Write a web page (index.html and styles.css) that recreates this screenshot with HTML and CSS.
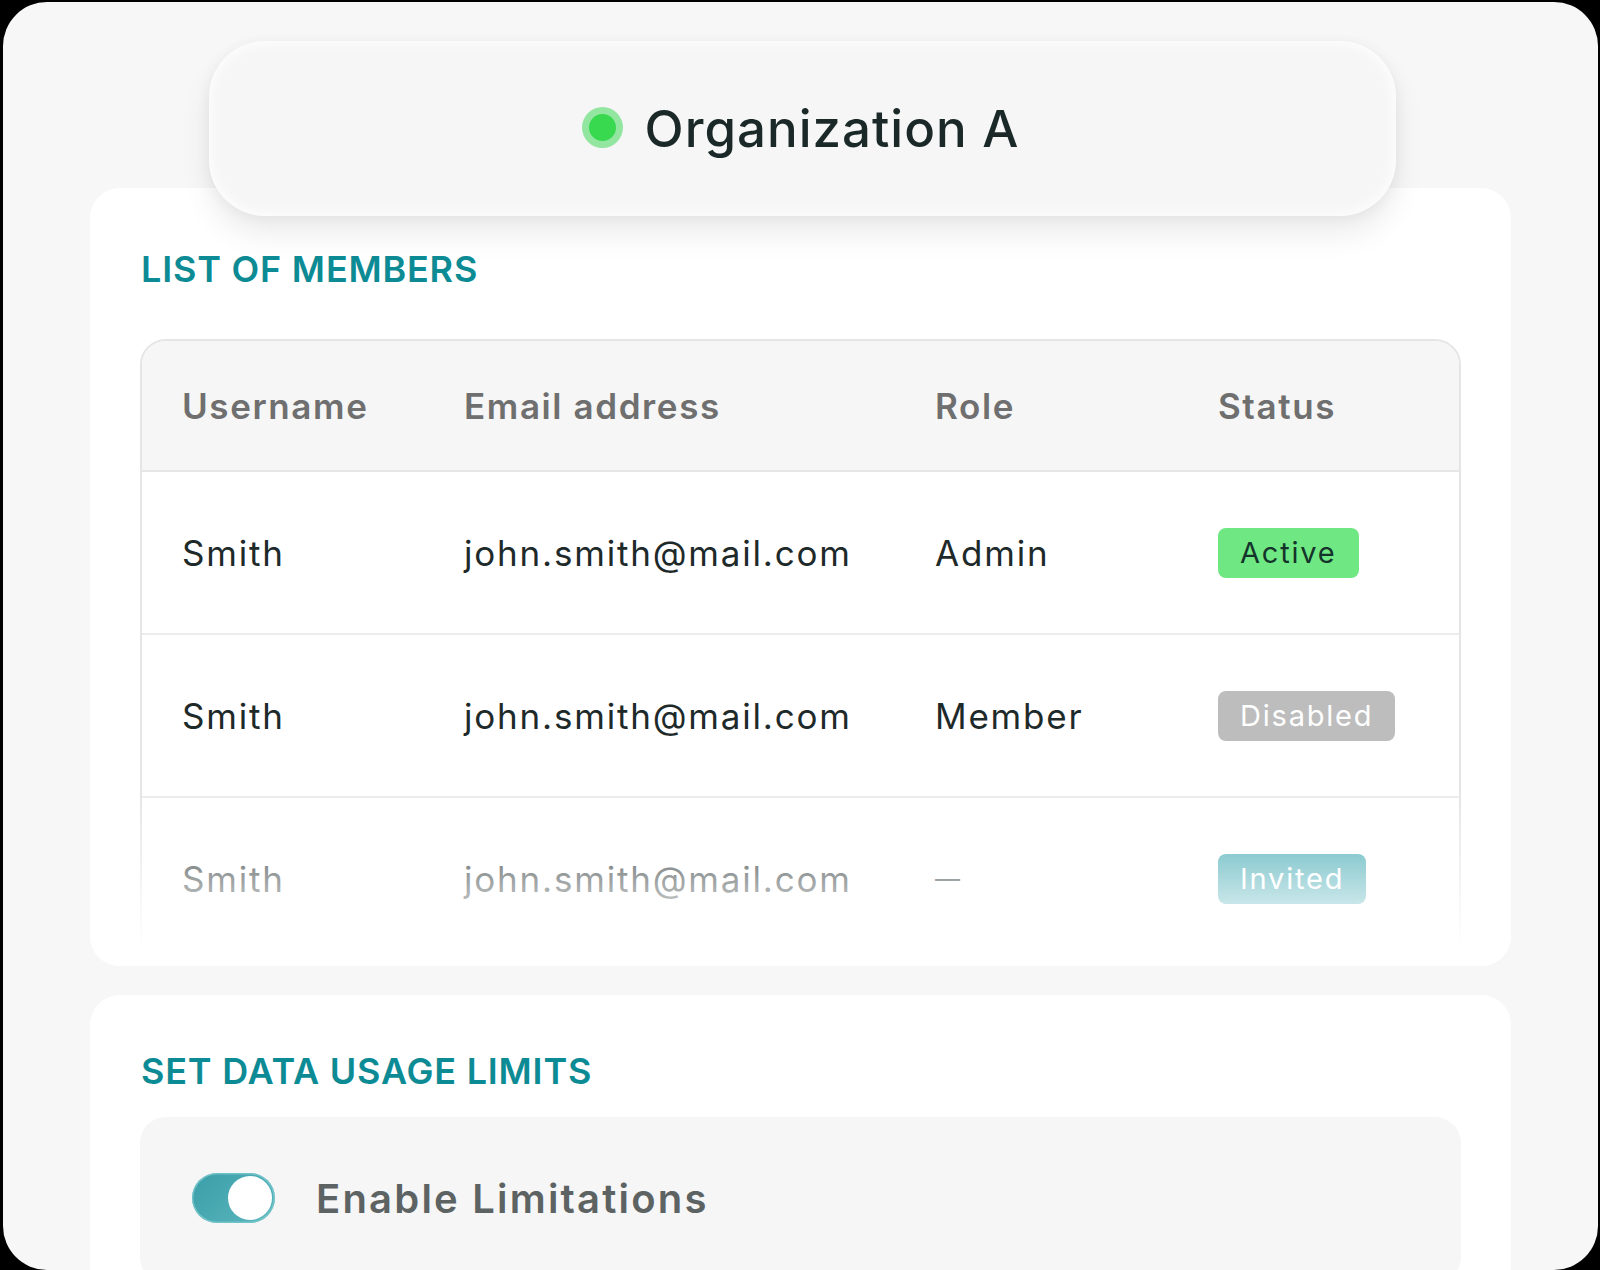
FILE: index.html
```html
<!DOCTYPE html>
<html lang="en">
<head>
<meta charset="utf-8">
<title>Organization A</title>
<link rel="stylesheet" href="styles.css">
</head>
<body>
<div class="frame">
  <div class="org-card">
    <span class="dot"><span class="dot-core"></span></span>
    <span class="org-name">Organization A</span>
  </div>

  <section class="card members">
    <h2 class="section-title">LIST OF MEMBERS</h2>
    <div class="table">
      <div class="row head">
        <div>Username</div>
        <div>Email address</div>
        <div>Role</div>
        <div>Status</div>
      </div>
      <div class="row">
        <div>Smith</div>
        <div>john.smith@mail.com</div>
        <div>Admin</div>
        <div><span class="badge active">Active</span></div>
      </div>
      <div class="row">
        <div>Smith</div>
        <div>john.smith@mail.com</div>
        <div>Member</div>
        <div><span class="badge disabled">Disabled</span></div>
      </div>
      <div class="row">
        <div>Smith</div>
        <div>john.smith@mail.com</div>
        <div><span class="dash">—</span></div>
        <div><span class="badge invited">Invited</span></div>
      </div>
    </div>
    <div class="fade"></div>
  </section>

  <section class="card limits">
    <h2 class="section-title">SET DATA USAGE LIMITS</h2>
    <div class="limit-box">
      <span class="toggle"><span class="knob"></span></span>
      <span class="limit-label">Enable Limitations</span>
    </div>
  </section>
</div>
</body>
</html>
```

FILE: styles.css
```css
* { box-sizing: border-box; }

body {
  margin: 0;
  background: #000;
  font-family: Inter, "Noto Sans", sans-serif;
}

.frame {
  margin: 2px 2px 0 3px;
  width: 1595px;
  height: 1268px;
  background: #f7f7f7;
  border-radius: 44px;
  overflow: hidden;
  padding-top: 39px;
}

.org-card {
  position: relative;
  z-index: 2;
  margin-left: 206px;
  margin-bottom: -28px;
  width: 1187px;
  height: 175px;
  border-radius: 56px;
  background: #f6f6f6;
  display: flex;
  align-items: center;
  justify-content: center;
  gap: 22px;
  box-shadow:
    inset 0 0 14px 2px rgba(255, 255, 255, 0.95),
    0 18px 30px rgba(0, 0, 0, 0.08),
    0 2px 14px rgba(0, 0, 0, 0.05);
}

.dot {
  width: 41px;
  height: 41px;
  border-radius: 50%;
  background: #92e6a0;
  display: flex;
  align-items: center;
  justify-content: center;
  margin-top: -2px;
}

.dot-core {
  width: 27px;
  height: 27px;
  border-radius: 50%;
  background: #38d84f;
}

.org-name {
  font-size: 51px;
  font-weight: 500;
  color: #1b2828;
  letter-spacing: 1px;
  margin-right: 4px;
}

.card {
  margin-left: 87px;
  width: 1421px;
  background: #fff;
  border-radius: 30px;
  padding: 0 50px;
}

.section-title {
  margin: 0;
  padding-left: 1px;
  font-size: 36px;
  line-height: 44px;
  font-weight: 600;
  color: #0d8b95;
  letter-spacing: 0.8px;
}

.members {
  position: relative;
  height: 778px;
  padding-top: 59px;
  overflow: hidden;
}

.table {
  margin-top: 48px;
  border: 2px solid #e5e5e5;
  border-radius: 26px;
  overflow: hidden;
}

.row {
  display: grid;
  grid-template-columns: 282px 471px 283px 1fr;
  align-items: center;
  padding-left: 40px;
  height: 163px;
  border-bottom: 2px solid #ececec;
  font-size: 35px;
  color: #1e2a2a;
  letter-spacing: 1.8px;
}

.row.head {
  height: 131px;
  background: #f6f6f6;
  border-bottom: 2px solid #e6e6e6;
  color: #6f6f6f;
  font-weight: 600;
  letter-spacing: 1.6px;
}

.dash {
  font-size: 25px;
  letter-spacing: 0;
  vertical-align: 4px;
}

.badge {
  display: inline-flex;
  align-items: center;
  height: 50px;
  padding: 0 22px;
  border-radius: 8px;
  font-size: 29px;
  letter-spacing: 1.8px;
}

.badge.active {
  background: #6fe884;
  color: #14332a;
}

.badge.disabled {
  background: #bdbdbd;
  color: #fff;
}

.badge.invited {
  background: #3fa8b2;
  color: #fff;
}

.fade {
  position: absolute;
  left: 0;
  right: 0;
  bottom: 0;
  height: 175px;
  background: linear-gradient(rgba(255, 255, 255, 0) 0%, #fff 90%);
  pointer-events: none;
}

.limits {
  margin-top: 29px;
  height: 400px;
  padding-top: 54px;
}

.limit-box {
  margin-top: 24px;
  background: #f6f6f6;
  border-radius: 26px;
  padding: 56px 0 60px 52px;
  display: flex;
  align-items: center;
  gap: 41px;
}

.toggle {
  width: 83px;
  height: 50px;
  border-radius: 25px;
  background: linear-gradient(135deg, #3a9ea8, #5db7be);
  box-shadow: inset 0 0 0 1.5px rgba(130, 205, 210, 0.7);
  display: flex;
  align-items: center;
  justify-content: flex-end;
  padding-right: 3px;
}

.knob {
  width: 44px;
  height: 44px;
  border-radius: 50%;
  background: #fff;
}

.limit-label {
  font-size: 40px;
  font-weight: 600;
  color: #5d6363;
  letter-spacing: 2.2px;
}
```
